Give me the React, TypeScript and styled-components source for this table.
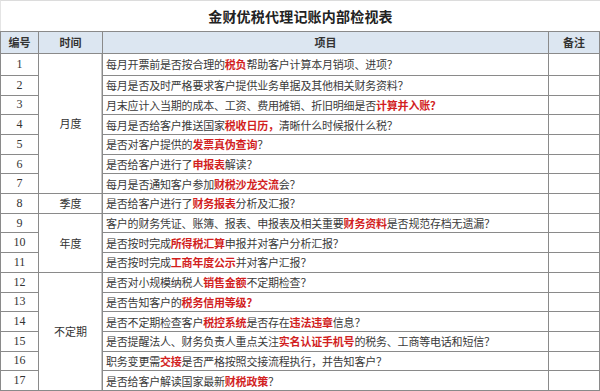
import React from "react";
import styled, { createGlobalStyle } from "styled-components";

const Global = createGlobalStyle`
  html, body { margin: 0; padding: 0; background: #fff; }
  body { font-family: "Liberation Serif", "Noto Sans CJK SC", serif; }
`;

const Page = styled.div`
  width: 600px;
  height: 391px;
  background: #fff;
  display: flex;
  flex-direction: column;
  overflow: hidden;
`;

const TitleBar = styled.div`
  height: 29px;
  border-top: 1px solid #dcdcdc;
  border-left: 1px solid #e4e4e4;
  display: flex;
  align-items: center;
  justify-content: center;
  font-family: "Noto Sans CJK SC", sans-serif;
  font-weight: 700;
  font-size: 14px;
  letter-spacing: 0.2px;
  color: #222;
  padding-top: 1px;
`;

const Table = styled.div`
  display: grid;
  grid-template-columns: 37px 63px 445px 50px;
  grid-template-rows: 21px 21px repeat(16, 1fr);
  gap: 1px;
  padding: 1px;
  background: #8a8a8a;
  height: 361px;
  box-sizing: border-box;
  width: 600px;
`;

const HeadCell = styled.div`
  background: #dce6f1;
  display: flex;
  align-items: center;
  justify-content: center;
  font-family: "Noto Sans CJK SC", sans-serif;
  font-weight: 700;
  font-size: 11px;
  color: #333;
`;

const NumCell = styled.div`
  background: #fff;
  display: flex;
  align-items: center;
  justify-content: center;
  font-family: "Liberation Serif", serif;
  font-size: 12px;
  color: #333;
`;

const TimeCell = styled.div<{ $start: number; $span: number }>`
  background: #fff;
  grid-column: 2;
  grid-row: ${(p) => p.$start} / span ${(p) => p.$span};
  display: flex;
  align-items: center;
  justify-content: center;
  font-family: "Noto Sans CJK SC", sans-serif;
  font-size: 11px;
  color: #333;
  box-shadow: inset -1px 0 0 #c8c8c8;
`;

const ItemCell = styled.div`
  background: #fff;
  grid-column: 3;
  display: flex;
  align-items: center;
  padding-left: 3px;
  font-family: "Noto Sans CJK SC", sans-serif;
  font-size: 11px;
  letter-spacing: -0.2px;
  color: #3a3a3a;
  white-space: nowrap;
  overflow: hidden;
`;

const NoteCell = styled.div`
  background: #fff;
  grid-column: 4;
`;

const Hot = styled.span`
  color: #d21f1f;
  font-weight: 700;
`;

type Seg = string | [string];

const rows: Seg[][] = [
  ["每月开票前是否按合理的", ["税负"], "帮助客户计算本月销项、进项？"],
  ["每月是否及时严格要求客户提供业务单据及其他相关财务资料？"],
  ["月末应计入当期的成本、工资、费用摊销、折旧明细是否", ["计算并入账？"]],
  ["每月是否给客户推送国家", ["税收日历，"], "清晰什么时候报什么税？"],
  ["是否对客户提供的", ["发票真伪查询"], "？"],
  ["是否给客户进行了", ["申报表"], "解读？"],
  ["每月是否通知客户参加", ["财税沙龙交流"], "会？"],
  ["是否给客户进行了", ["财务报表"], "分析及汇报？"],
  ["客户的财务凭证、账簿、报表、申报表及相关重要", ["财务资料"], "是否规范存档无遗漏？"],
  ["是否按时完成", ["所得税汇算"], "申报并对客户分析汇报？"],
  ["是否按时完成", ["工商年度公示"], "并对客户汇报？"],
  ["是否对小规模纳税人", ["销售金额"], "不定期检查？"],
  ["是否告知客户的", ["税务信用等级？"]],
  ["是否不定期检查客户", ["税控系统"], "是否存在", ["违法违章"], "信息？"],
  ["是否提醒法人、财务负责人重点关注", ["实名认证手机号"], "的税务、工商等电话和短信？"],
  ["职务变更需", ["交接"], "是否严格按照交接流程执行，并告知客户？"],
  ["是否给客户解读国家最新", ["财税政策"], "？"],
];

const periods = [
  { label: "月度", start: 1, span: 7 },
  { label: "季度", start: 8, span: 1 },
  { label: "年度", start: 9, span: 3 },
  { label: "不定期", start: 12, span: 6 },
];

export default function App() {
  return (
    <Page>
      <Global />
      <TitleBar>金财优税代理记账内部检视表</TitleBar>
      <Table>
        <HeadCell>编号</HeadCell>
        <HeadCell>时间</HeadCell>
        <HeadCell>项目</HeadCell>
        <HeadCell>备注</HeadCell>
        {periods.map((p) => (
          <TimeCell key={p.label} $start={p.start + 1} $span={p.span}>
            {p.label}
          </TimeCell>
        ))}
        {rows.map((segs, i) => (
          <React.Fragment key={i}>
            <NumCell style={{ gridRow: i + 2, gridColumn: 1 }}>{i + 1}</NumCell>
            <ItemCell style={{ gridRow: i + 2 }}>
              {segs.map((s, j) =>
                typeof s === "string" ? <span key={j}>{s}</span> : <Hot key={j}>{s[0]}</Hot>
              )}
            </ItemCell>
            <NoteCell style={{ gridRow: i + 2 }} />
          </React.Fragment>
        ))}
      </Table>
    </Page>
  );
}
